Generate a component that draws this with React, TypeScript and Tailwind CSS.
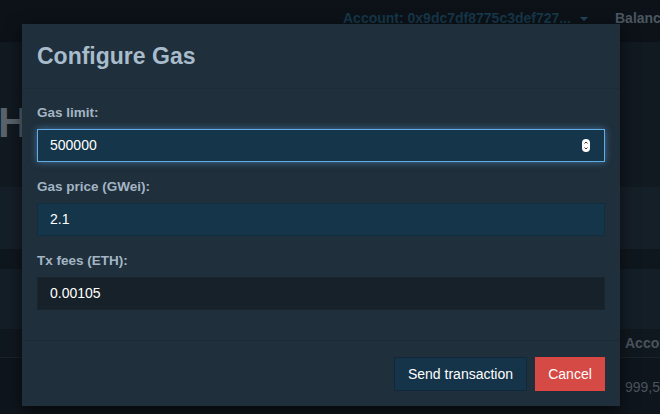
import React from 'react';

function Field({
  label,
  value,
  variant,
}: {
  label: string;
  value: string;
  variant: 'focus' | 'normal' | 'readonly';
}) {
  const box =
    variant === 'focus'
      ? 'bg-[#15364a] border-[#62ace8] shadow-[0_0_7px_rgba(98,172,232,0.55)]'
      : variant === 'normal'
        ? 'bg-[#15364a] border-[#122d3e]'
        : 'bg-[#172129] border-[#19242d]';
  return (
    <div className="mb-4">
      <label className="block h-[18px] leading-[18px] mb-[7px] text-[13.5px] font-bold text-[#a3b5c4]">
        {label}
      </label>
      <div className={`h-[33px] border flex items-center justify-between pl-[12px] pr-[14px] ${box}`}>
        <span className="text-[14px] text-white">{value}</span>
        {variant === 'focus' && (
          <span className="w-[8px] h-[13px] rounded-full bg-white flex flex-col items-center justify-center">
            <svg width="6" height="11" viewBox="0 0 6 11" fill="none" stroke="#333" strokeWidth="1">
              <path d="M1.5 3.5 L3 2 L4.5 3.5" />
              <path d="M1.5 7.5 L3 9 L4.5 7.5" />
            </svg>
          </span>
        )}
      </div>
    </div>
  );
}

export default function App() {
  return (
    <div
      className="relative w-[660px] h-[414px] overflow-hidden bg-[#0e151c]"
      style={{ fontFamily: '"Liberation Sans", Arial, sans-serif' }}
    >
      {/* page behind the overlay */}
      <div className="h-[42px] bg-[#0c1218] flex items-start pt-[10px] pl-[343px] whitespace-nowrap">
        <span className="text-[14px] leading-[16px] font-bold text-[#163749]">Account: 0x9dc7df8775c3def727...</span>
        <span className="ml-[9px] mt-[7px] w-0 h-0 border-l-[4px] border-r-[4px] border-t-[4px] border-l-transparent border-r-transparent border-t-[#22445a]" />
        <span className="ml-[27px] text-[14px] leading-[16px] font-bold text-[#4b5660]">Balance</span>
      </div>
      <div className="h-[145px] bg-[#111921] pt-[60px]">
        <div className="text-[42px] leading-[42px] font-bold text-[#58636b] -ml-[2px]">H</div>
      </div>
      <div className="h-[62px] bg-[#151f28]" />
      <div className="h-[20px] bg-[#0f171e]" />
      <div className="h-[60px] bg-[#141e27]" />
      <div className="h-[28px] bg-[#10181f] flex items-center pl-[625px] whitespace-nowrap">
        <span className="text-[14px] font-bold text-[#4a545d]">Account</span>
      </div>
      <div className="h-[57px] border-t border-[#1a232b] bg-[#0e151c] pt-[17px] pl-[625px] whitespace-nowrap">
        <span className="text-[14px] text-[#4a545d]">999,59</span>
      </div>

      {/* modal */}
      <div className="absolute left-[22px] top-[24px] w-[598px] h-[382px] bg-[#1f2f3c] shadow-[0_5px_15px_rgba(0,0,0,0.6)] flex flex-col">
        <div className="h-[65px] px-[15px] flex items-center border-b border-[#1b2c37]">
          <h2 className="text-[23px] font-bold text-[#a9bccb]">Configure Gas</h2>
        </div>
        <div className="pt-[15px] px-[15px] pb-[14px] border-b border-[#1b2c37]">
          <Field label="Gas limit:" value="500000" variant="focus" />
          <Field label="Gas price (GWei):" value="2.1" variant="normal" />
          <Field label="Tx fees (ETH):" value="0.00105" variant="readonly" />
        </div>
        <div className="flex-1 flex justify-end items-start gap-2 pt-[16px] px-[15px]">
          <button className="h-[34px] w-[133px] border border-[#10283a] bg-[#15344a] text-[14px] text-white">
            Send transaction
          </button>
          <button className="h-[34px] w-[70px] border border-[#e04541] bg-[#d54a45] text-[14px] text-white">
            Cancel
          </button>
        </div>
      </div>
    </div>
  );
}
